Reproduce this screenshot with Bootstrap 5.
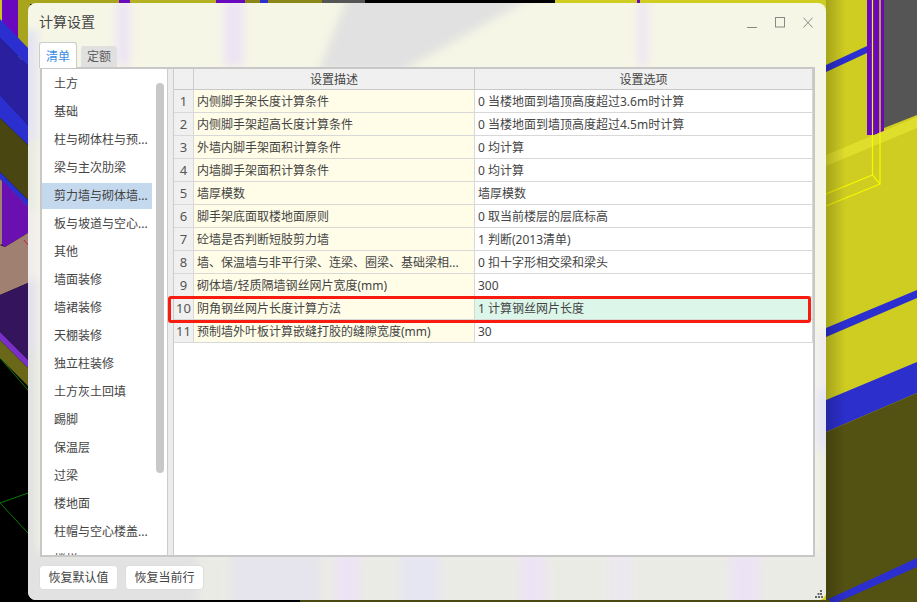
<!DOCTYPE html>
<html lang="zh-CN">
<head>
<meta charset="utf-8">
<title>计算设置</title>
<link href="https://cdn.jsdelivr.net/npm/bootstrap@5.3.0/dist/css/bootstrap.min.css" rel="stylesheet">
<style>
html,body{margin:0;height:100%;overflow:hidden;background:#000;}
body{font-family:"Noto Sans","Noto Sans CJK SC",sans-serif;font-size:12px;color:#444;}
.scene{position:absolute;left:0;top:0;width:917px;height:602px;display:block;}
.win{position:absolute;left:28px;top:3px;width:798px;height:597px;border-radius:8px;display:flex;flex-direction:column;}
.win-head{height:38px;flex:none;padding:0 13px 0 11px;display:flex;align-items:center;justify-content:space-between;}
.win-title{font-size:14px;color:#444;line-height:1;margin-bottom:1px;}
.win-ctrls{display:flex;gap:18px;margin-top:1px;}
.win-ctrls svg{display:block;width:10px;height:12px;}
.tabbar{height:27px;flex:none;margin-left:11px;border:0;gap:4px;align-items:flex-end;display:flex;flex-wrap:nowrap;position:relative;z-index:2;}
.tabbar .nav-link{font-size:12px;line-height:1;padding:0;text-align:center;margin:0;}
.tabbar .nav-link.active{width:38px;height:26px;line-height:27px;background:#fff;border:1px solid #ccc;border-bottom:0;border-radius:3px 3px 0 0;color:#3a8ee6;}
.tabbar .nav-link.other{width:36px;height:21px;line-height:22px;margin-bottom:1px;background:#e0e0e0;border:0;border-radius:3px 3px 0 0;color:#5c5c5c;}
.panes{margin-left:12px;width:775px;height:490px;flex:none;margin-top:-1px;border:2px solid #c8c8c8;display:flex;position:relative;background:#fff;}
.side{width:126px;flex:none;overflow:hidden;position:relative;border-right:1px solid #ccc;background:#fff;padding-top:2px;}
.side-item{width:110px;height:26px;line-height:26px;margin-bottom:2px;padding-left:12px;white-space:nowrap;color:#444;}
.side-item.on{background:#c5d9ee;}
.side-thumb{position:absolute;left:114px;top:14px;width:8px;height:390px;border-radius:4px;background:#c8c8c8;}
.split{width:6px;flex:none;background:#ececec;border-right:1px solid #ccc;}
.grid-wrap{flex:1 1 auto;background:#fff;overflow:hidden;}
table.cfg{table-layout:fixed;width:639px;margin:0;border-collapse:separate;border-spacing:0;font-size:12px;color:#444;}
table.cfg th{height:21px;padding:1px 0 0;background:#f0f0f0;font-weight:400;text-align:center;border-bottom:1px solid #c8c8c8;border-right:1px solid #ccc;line-height:1;}
table.cfg td{height:23px;padding:1px 3px 0;border-bottom:1px solid #d8d8d8;border-right:1px solid #d8d8d8;white-space:nowrap;overflow:hidden;line-height:1;}
table.cfg td.num{background:#f0f0f0;text-align:center;padding:1px 0 0;font-size:13px;color:#555;}
table.cfg td.desc{background:#fffde8;}
table.cfg td.opt{background:#fff;}
table.cfg td.opt.hit{background:#dcf6ea;}
.redbox{position:absolute;left:126px;top:227px;width:643px;height:27px;border:3px solid #f81c10;border-radius:3px;pointer-events:none;}
.win-foot{flex:1 1 auto;padding:8px 0 0 11px;display:flex;gap:7px;align-items:flex-start;}
.btn.foot-btn{width:79px;height:25px;padding:0;font-size:12px;line-height:23px;color:#444;background:#fff;border:1px solid #ddd;border-radius:4px;}
.grip{position:absolute;right:3px;bottom:2px;width:8px;height:8px;display:block;}
</style>
</head>
<body>
<svg class="scene" viewBox="0 0 917 602" aria-hidden="true">
  <defs>
    <filter id="soft" x="-30%" y="-30%" width="160%" height="160%"><feGaussianBlur stdDeviation="5"/></filter>
    <clipPath id="dlg"><rect x="28" y="3" width="798" height="597" rx="8"/></clipPath>
    <linearGradient id="shadeR" x1="0" x2="1" y1="0" y2="0"><stop offset="0" stop-color="#000" stop-opacity=".2"/><stop offset="1" stop-color="#000" stop-opacity="0"/></linearGradient>
  </defs>
  <rect width="917" height="602" fill="#000"/>
  <!-- left strip -->
  <rect x="0" y="0" width="2" height="30" fill="#c8c620"/>
  <rect x="2" y="0" width="16" height="40" fill="#6a08c0"/>
  <rect x="18" y="0" width="12" height="60" fill="#a8a41c"/>
  <polygon points="0,38 28,66 28,125 0,95" fill="#2a1f9e"/>
  <polygon points="0,19 28,48 28,66 0,38" fill="#2c2fd0"/>
  <polygon points="0,95 28,125 28,145 0,118" fill="#2c2fd0"/>
  <polygon points="0,118 28,145 28,200 0,172" fill="#4a4612"/>
  <polygon points="0,172 28,200 28,207 0,179" fill="#2c2fd0"/>
  <polygon points="0,179 28,207 28,233 0,245" fill="#a08070"/>
  <polygon points="2,180 28,207 28,233 5,247 2,245" fill="#6a10b0"/>
  <polygon points="0,245 5,247 28,233 28,283 0,295" fill="#a08070"/>
  <line x1="24" y1="240" x2="28" y2="245" stroke="#c02040" stroke-width="1"/>
  <polygon points="0,295 28,283 28,360 0,332" fill="#34145c"/>
  <polygon points="0,332 28,360 28,368 0,340" fill="#7a30c8"/>
  <polygon points="0,340 28,368 28,386 0,358" fill="#6a6818"/>
  <line x1="0" y1="358" x2="28" y2="390" stroke="#0a7a0a" stroke-width="1"/>
  <line x1="0" y1="503" x2="28" y2="493" stroke="#0a7a0a" stroke-width="1"/>
  <line x1="0" y1="503" x2="28" y2="533" stroke="#0a7a0a" stroke-width="1"/>
  <!-- top strip -->
  <rect x="28" y="0" width="91" height="4" fill="#a8a41c"/>
  <rect x="119" y="0" width="11" height="4" fill="#6a08c0"/>
  <rect x="130" y="0" width="86" height="4" fill="#b4b220"/>
  <rect x="216" y="0" width="29" height="4" fill="#6a08c0"/>
  <rect x="245" y="0" width="15" height="4" fill="#8a8618"/>
  <rect x="260" y="0" width="8" height="4" fill="#2c2fd0"/>
  <rect x="268" y="0" width="54" height="4" fill="#8a8618"/>
  <rect x="322" y="0" width="43" height="4" fill="#555"/>
  <rect x="555" y="0" width="290" height="4" fill="#cfcd22"/>
  <rect x="637" y="0" width="12" height="4" fill="#6a08c0"/>
  <!-- right side -->
  <rect x="640" y="0" width="277" height="602" fill="#cfcd22"/>
  <polygon points="826,65 867,46 867,53 826,72" fill="#2c2fd0"/>
  <polygon points="884,0 917,0 917,115 884,128" fill="#555"/>
  <rect x="867" y="0" width="17" height="135" fill="#6a08c0"/>
  <polygon points="826,155 917,117 917,128 826,166" fill="#e0de2c"/>
  <polygon points="826,328 917,290 917,298 826,337" fill="#2c2fd0"/>
  <polygon points="826,400 917,362 917,393 826,432" fill="#2c2fcc"/>
  <polygon points="826,432 917,393 917,602 826,602" fill="#545212"/>
  <polygon points="822,602 917,558 917,567 838,602" fill="#2c2fd0"/>
  <g fill="none" stroke="#f8f800" stroke-width="1.2">
    <line x1="872.500" y1="0" x2="872.500" y2="175"/>
    <line x1="880" y1="0" x2="880" y2="184"/>
    <polyline points="826,194 872.500,175 880,184 826,206"/>
  </g>
  <rect x="826" y="0" width="20" height="602" fill="url(#shadeR)"/>
  <!-- bottom strip -->
  <rect x="300" y="600" width="530" height="2" fill="#4a4a10"/>
  <!-- frosted dialog surface -->
  <g clip-path="url(#dlg)">
    <rect x="28" y="3" width="798" height="597" fill="#f6f6e6"/>
    <g filter="url(#soft)">
      <rect x="116" y="0" width="14" height="66" fill="#ece4f4"/>
      <rect x="224" y="0" width="20" height="66" fill="#ece4f4"/>
      <rect x="638" y="0" width="10" height="66" fill="#ece4f4"/>
      <polygon points="350,-10 545,-10 400,72 318,72" fill="#e1e1e1"/>
      <rect x="18" y="30" width="20" height="110" fill="#e4e4f2"/>
      <rect x="18" y="140" width="20" height="70" fill="#eaeae2"/>
      <rect x="18" y="210" width="20" height="70" fill="#f0ecec"/>
      <rect x="18" y="280" width="20" height="70" fill="#e4e0ec"/>
      <rect x="18" y="350" width="20" height="260" fill="#e1e1e1"/>
      <rect x="816" y="330" width="20" height="60" fill="#f0ecf0"/>
      <rect x="816" y="390" width="20" height="60" fill="#e4e4f4"/>
      <rect x="816" y="450" width="20" height="160" fill="#ececE4"/>
      <rect x="28" y="552" width="798" height="60" fill="#ebebe6"/>
      <rect x="28" y="552" width="170" height="60" fill="#e2e2e2"/>
      <rect x="230" y="552" width="90" height="60" fill="#e6e4ec"/>
      <rect x="335" y="552" width="25" height="60" fill="#ece4f4"/>
      <rect x="400" y="552" width="40" height="60" fill="#e6e6f2"/>
      <rect x="520" y="552" width="25" height="60" fill="#ece4f4"/>
      <rect x="610" y="552" width="20" height="60" fill="#ece8f0"/>
      <rect x="730" y="552" width="30" height="60" fill="#ece4f4"/>
    </g>
  </g>
</svg>

<div class="win">
  <div class="win-head">
    <span class="win-title">计算设置</span>
    <div class="win-ctrls">
      <svg viewBox="0 0 10 12"><line x1="0" y1="10.500" x2="10" y2="10.500" stroke="#888" stroke-width="1"/></svg>
      <svg viewBox="0 0 10 12"><rect x=".5" y=".5" width="9" height="9.500" fill="none" stroke="#888" stroke-width="1"/></svg>
      <svg viewBox="0 0 10 12"><path d="M.3 .6 9.700 10.600M9.700 .6 .3 10.600" fill="none" stroke="#888" stroke-width="1"/></svg>
    </div>
  </div>
  <ul class="nav tabbar">
    <li class="nav-item"><a class="nav-link active" href="#">清单</a></li>
    <li class="nav-item"><a class="nav-link other" href="#">定额</a></li>
  </ul>
  <div class="panes">
    <div class="side">
      <div class="side-item">土方</div>
      <div class="side-item">基础</div>
      <div class="side-item">柱与砌体柱与预...</div>
      <div class="side-item">梁与主次肋梁</div>
      <div class="side-item on">剪力墙与砌体墙...</div>
      <div class="side-item">板与坡道与空心...</div>
      <div class="side-item">其他</div>
      <div class="side-item">墙面装修</div>
      <div class="side-item">墙裙装修</div>
      <div class="side-item">天棚装修</div>
      <div class="side-item">独立柱装修</div>
      <div class="side-item">土方灰土回填</div>
      <div class="side-item">踢脚</div>
      <div class="side-item">保温层</div>
      <div class="side-item">过梁</div>
      <div class="side-item">楼地面</div>
      <div class="side-item">柱帽与空心楼盖...</div>
      <div class="side-item">楼梯</div>
      <div class="side-thumb"></div>
    </div>
    <div class="split"></div>
    <div class="grid-wrap">
      <table class="cfg">
        <colgroup><col style="width:20px"><col style="width:281px"><col style="width:338px"></colgroup>
        <thead><tr><th></th><th>设置描述</th><th>设置选项</th></tr></thead>
        <tbody>
          <tr><td class="num">1</td><td class="desc">内侧脚手架长度计算条件</td><td class="opt">0 当楼地面到墙顶高度超过3.6m时计算</td></tr>
          <tr><td class="num">2</td><td class="desc">内侧脚手架超高长度计算条件</td><td class="opt">0 当楼地面到墙顶高度超过4.5m时计算</td></tr>
          <tr><td class="num">3</td><td class="desc">外墙内脚手架面积计算条件</td><td class="opt">0 均计算</td></tr>
          <tr><td class="num">4</td><td class="desc">内墙脚手架面积计算条件</td><td class="opt">0 均计算</td></tr>
          <tr><td class="num">5</td><td class="desc">墙厚模数</td><td class="opt">墙厚模数</td></tr>
          <tr><td class="num">6</td><td class="desc">脚手架底面取楼地面原则</td><td class="opt">0 取当前楼层的层底标高</td></tr>
          <tr><td class="num">7</td><td class="desc">砼墙是否判断短肢剪力墙</td><td class="opt">1 判断(2013清单)</td></tr>
          <tr><td class="num">8</td><td class="desc">墙、保温墙与非平行梁、连梁、圈梁、基础梁相...</td><td class="opt">0 扣十字形相交梁和梁头</td></tr>
          <tr><td class="num">9</td><td class="desc">砌体墙/轻质隔墙钢丝网片宽度(mm)</td><td class="opt">300</td></tr>
          <tr><td class="num">10</td><td class="desc">阴角钢丝网片长度计算方法</td><td class="opt hit">1 计算钢丝网片长度</td></tr>
          <tr><td class="num">11</td><td class="desc">预制墙外叶板计算嵌缝打胶的缝隙宽度(mm)</td><td class="opt">30</td></tr>
        </tbody>
      </table>
    </div>
    <div class="redbox"></div>
  </div>
  <div class="win-foot">
    <button type="button" class="btn foot-btn">恢复默认值</button>
    <button type="button" class="btn foot-btn">恢复当前行</button>
  </div>
  <svg class="grip" viewBox="0 0 8 8" aria-hidden="true"><path d="M5 0h2v2H5zM2.500 3h2v2h-2zM5 3h2v2H5zM0 6h2v2H0zM3 6h2v2H3zM6 6h2v2H6z" fill="#666"/></svg>
</div>
</body>
</html>
